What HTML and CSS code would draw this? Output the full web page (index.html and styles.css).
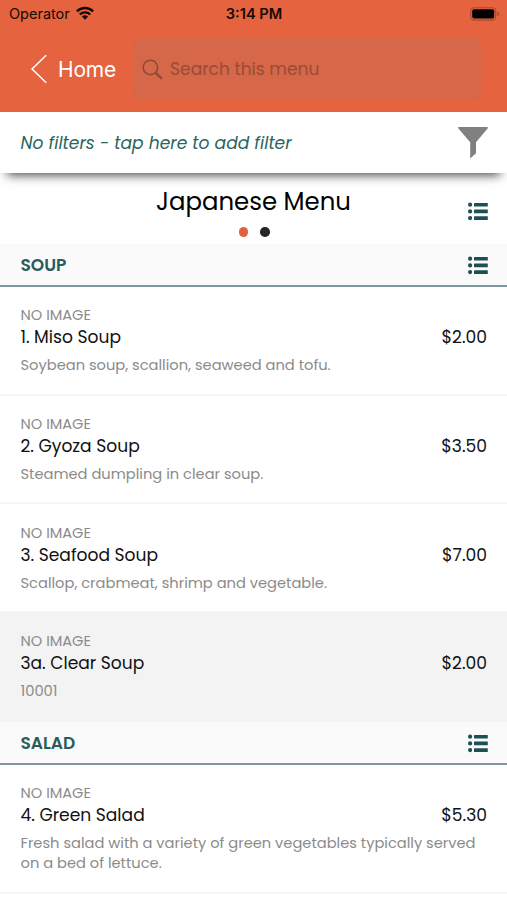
FILE: index.html
```html
<!DOCTYPE html>
<html lang="en">
<head>
<meta charset="utf-8">
<title>Japanese Menu</title>
<link rel="stylesheet" href="styles.css">
</head>
<body>
<svg width="0" height="0" class="defs">
  <symbol id="list" viewBox="0 0 20 19">
    <circle cx="2.1" cy="2.7" r="2.1"/><rect x="6" y="0.9" width="13.8" height="3.6" rx=".5"/>
    <circle cx="2.1" cy="9.4" r="2.1"/><rect x="6" y="7.6" width="13.8" height="3.6" rx=".5"/>
    <circle cx="2.1" cy="16.1" r="2.1"/><rect x="6" y="14.3" width="13.8" height="3.6" rx=".5"/>
  </symbol>
</svg>
<header class="top">
  <div class="status">
    <div class="carrier"><span>Operator</span>
      <svg class="wifi" viewBox="0 0 18 14" width="18" height="14"><g fill="none" stroke="#160a06" stroke-width="2.4"><path d="M.9 5.3a11.6 11.6 0 0 1 16.2 0"/><path d="M3.8 8.5a7.4 7.4 0 0 1 10.4 0"/></g><path fill="#160a06" d="M5.9 10.6a4.5 4.5 0 0 1 6.2 0L9 13.7z"/></svg>
    </div>
    <span class="time">3:14 PM</span>
    <svg class="battery" viewBox="0 0 30 14" width="30" height="14"><rect x=".7" y=".7" width="25" height="12.4" rx="3.6" fill="none" stroke="#a8492f" stroke-width="1.1"/><rect x="2.2" y="2.2" width="22" height="9.4" rx="2" fill="#000"/><path d="M27.4 4.8q2 .5 2 2.1t-2 2.1z" fill="#a8492f"/></svg>
  </div>
  <div class="nav">
    <svg class="back" viewBox="0 0 17 30" width="17" height="30"><path d="M15.2 1.2 1 15l14.2 13.8" fill="none" stroke="#fff" stroke-width="1.5"/></svg>
    <span class="home">Home</span>
    <div class="search">
      <svg viewBox="0 0 21 21" width="21" height="21"><g fill="none" stroke="#8d4b36"><circle cx="8.4" cy="8.4" r="7.2" stroke-width="1.6"/><path d="m13.6 13.6 6.2 6" stroke-width="2.2"/></g></svg>
      <span>Search this menu</span>
    </div>
  </div>
</header>
<div class="filter">
  <span>No filters - tap here to add filter</span>
  <svg viewBox="0 0 30 32" width="30" height="32"><path d="M.6 0h28.8q1 .7.2 1.6L18 15.2v11L12.2 31.6V15.2L.4 1.6Q-.2.7.6 0z" fill="#808080"/></svg>
</div>
<main>
  <div class="heading">
    <h1>Japanese Menu</h1>
    <div class="dots"><i class="dot on"></i><i class="dot"></i></div>
    <svg class="list"><use href="#list"/></svg>
  </div>
  <section>
    <h2><span>SOUP</span><svg class="list"><use href="#list"/></svg></h2>
    <article><div class="label">NO IMAGE</div><div class="row"><span>1. Miso Soup</span><span>$2.00</span></div><p>Soybean soup, scallion, seaweed and tofu.</p></article>
    <article><div class="label">NO IMAGE</div><div class="row"><span>2. Gyoza Soup</span><span>$3.50</span></div><p>Steamed dumpling in clear soup.</p></article>
    <article><div class="label">NO IMAGE</div><div class="row"><span>3. Seafood Soup</span><span>$7.00</span></div><p>Scallop, crabmeat, shrimp and vegetable.</p></article>
    <article class="shaded"><div class="label">NO IMAGE</div><div class="row"><span>3a. Clear Soup</span><span>$2.00</span></div><p>10001</p></article>
  </section>
  <section>
    <h2><span>SALAD</span><svg class="list"><use href="#list"/></svg></h2>
    <article><div class="label">NO IMAGE</div><div class="row"><span>4. Green Salad</span><span>$5.30</span></div><p>Fresh salad with a variety of green vegetables typically served<br>on a bed of lettuce.</p></article>
  </section>
</main>
</body>
</html>
```
FILE: styles.css
```css
* { box-sizing: border-box; margin: 0; padding: 0; }
body {
  font-family: Poppins, Inter, "Open Sans", sans-serif;
  background: #fff; color: #111; height: 900px; overflow: hidden;
}
svg { display: block; flex: none; }
.defs { position: absolute; }
.top { height: 112px; background: #e5633e; }
.status { height: 28px; display: grid; grid-template-columns: 1fr auto 1fr; align-items: center; padding: 0 8px 0 9px; color: #160a06; font: 14.5px/28px Inter, sans-serif; }
.carrier { display: flex; align-items: center; gap: 6px; }
.wifi { margin-top: -3px; }
.time { font-weight: 600; font-size: 14.6px; }
.battery { justify-self: end; margin: -1px -1px 0 0; }
.nav { display: flex; align-items: center; padding: 10px 26px 0 31px; }
.home { width: 74px; margin: 2px 0 0 10px; color: #fff; font: 21px/30px Inter, sans-serif; letter-spacing: -.2px; }
.search { width: 348px; height: 62px; display: flex; align-items: center; gap: 7px; padding-left: 9px; border-radius: 8px; background: #d66748; color: #964d37; font-size: 17.1px; margin-left: 1px; }
.filter { position: relative; height: 61px; background: #fff; display: flex; align-items: center; justify-content: space-between; padding: 0 19px 0 20.5px; color: #2a6660; font-size: 17.1px; font-style: italic; box-shadow: 0 9px 10px -7px #444; }
.heading { height: 71px; position: relative; text-align: center; padding-top: 10px; }
.heading h1 { font-size: 24.4px; line-height: 38px; font-weight: 400; color: #000; }
.dots { display: flex; justify-content: center; gap: 12px; margin: 6px 0 0 1px; }
.dot { width: 9.5px; height: 9.5px; border-radius: 50%; background: #262626; }
.dot.on { background: #e0633e; }
.list { width: 20px; height: 19px; fill: #1d4f55; }
.heading .list { position: absolute; right: 19px; top: 29px; }
h2 { height: 43px; display: flex; align-items: center; justify-content: space-between; padding: 1px 19px 0 20.5px; background: #fafafa; border-bottom: 2px solid #7c98a2; color: #255e5a; font-size: 17px; font-weight: 600; }
h2 .list { margin-top: 1px; }
article { height: 108.7px; padding: 19.3px 20px 0 20.5px; border-bottom: 2px solid #f6f6f6; }
article.shaded { background: #f3f3f3; border-color: #f3f3f3; }
section + section article { height: 129px; }
.label { font-size: 14.6px; line-height: 19px; color: #8b8b8b; }
.row { display: flex; justify-content: space-between; font-size: 17.1px; line-height: 25px; }
p { font-size: 14.66px; line-height: 20.2px; margin-top: 5px; color: #8b8b8b; white-space: nowrap; }
```
